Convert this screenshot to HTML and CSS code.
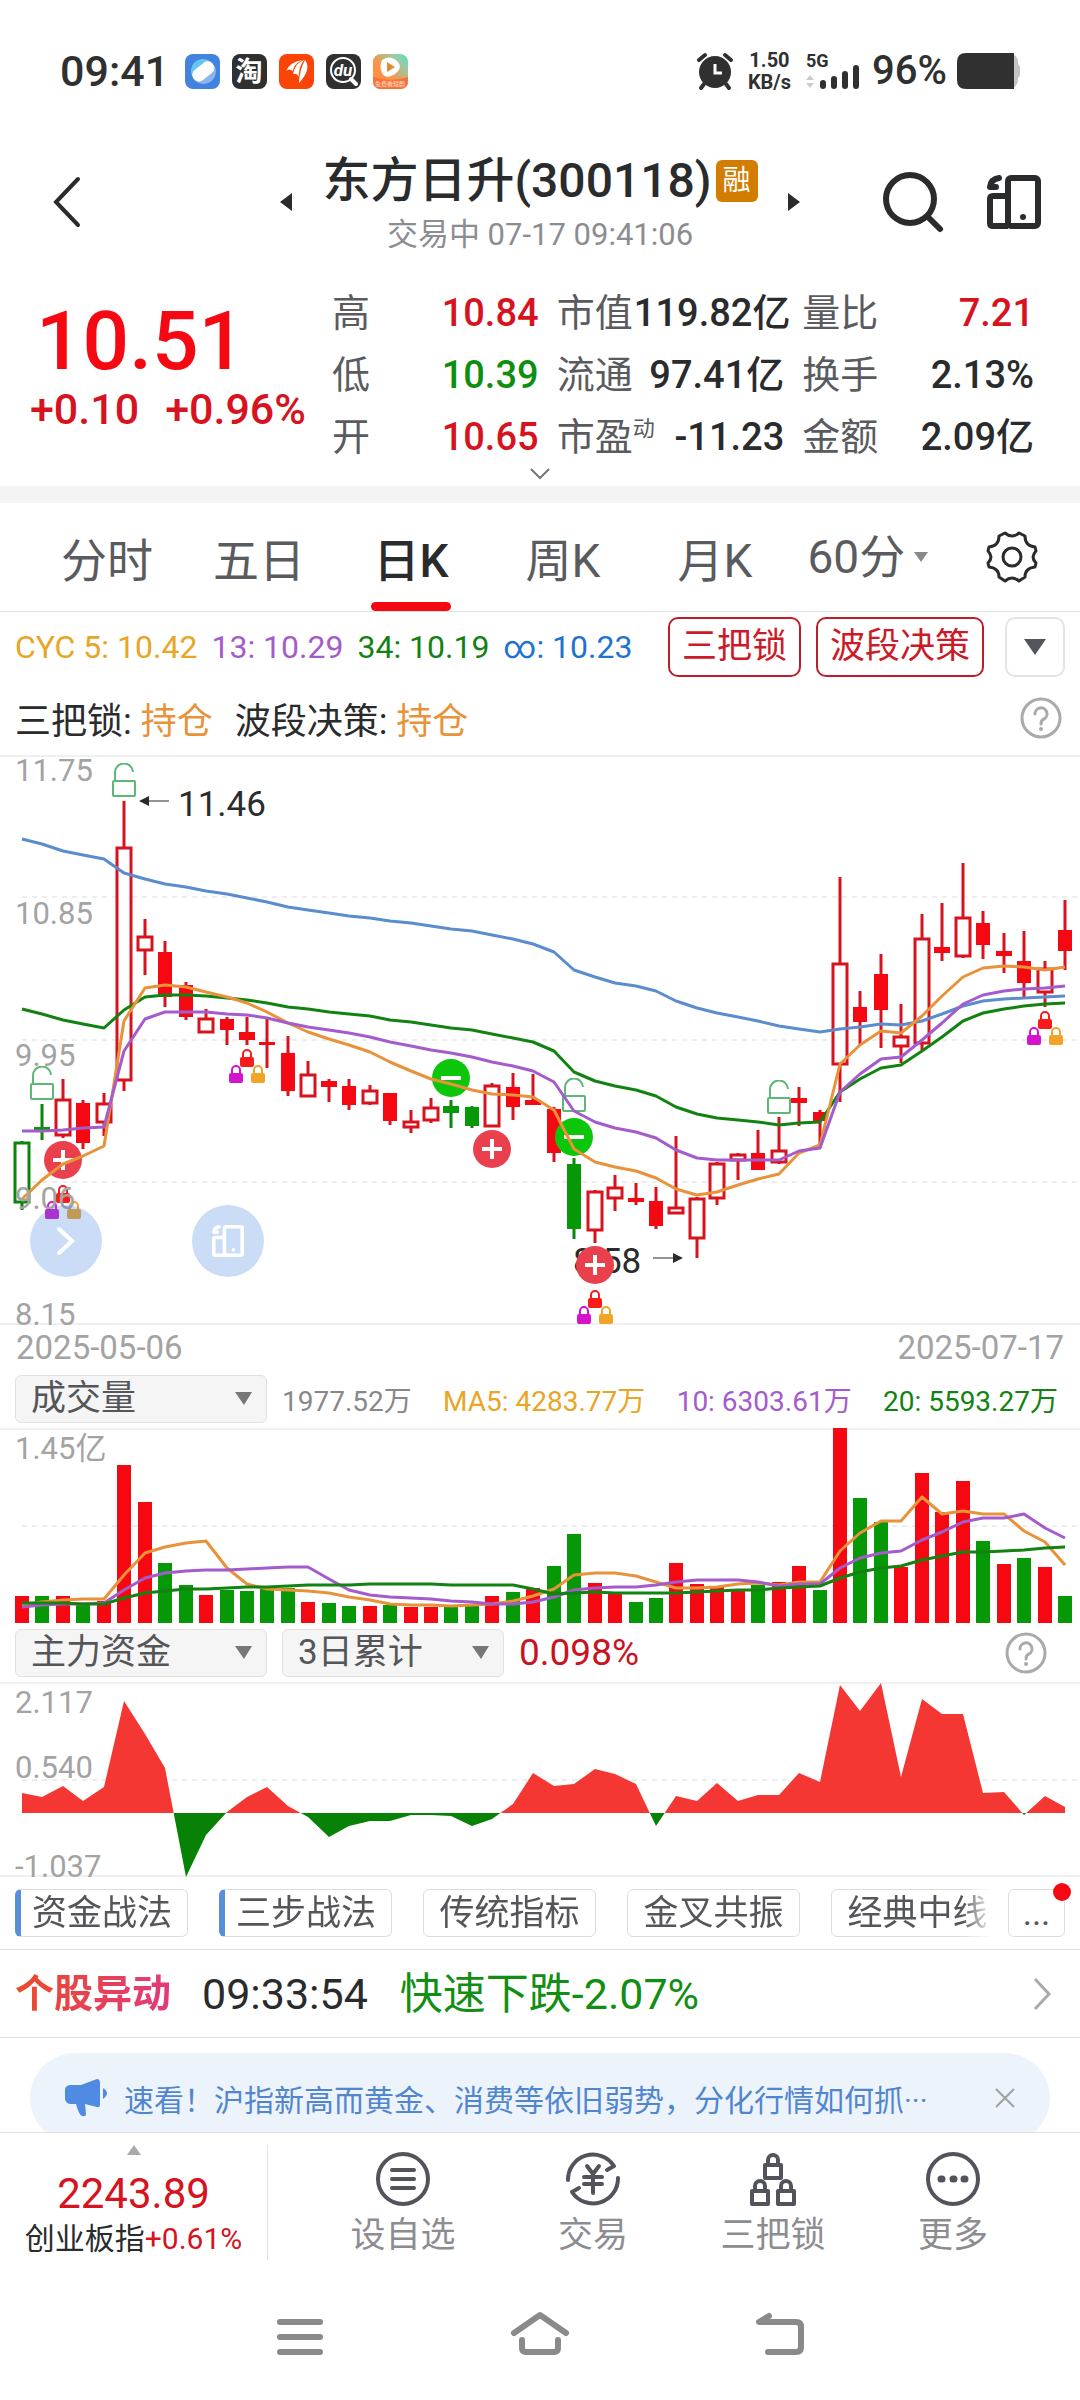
FILE: index.html
```html
<!DOCTYPE html>
<html lang="zh-CN">
<head>
    <meta charset="UTF-8">
    <meta name="viewport" content="width=device-width, initial-scale=1.0">
    <title>东方日升(300118)</title>
    <link rel="stylesheet" href="styles.css">
</head>
<body>
    <!-- shared symbols -->
    <svg class="sprite" aria-hidden="true">
        <symbol id="i-fold" viewBox="0 0 54 54">
            <path d="M12 3Q4 4 3 12H9" fill="none" stroke="currentColor" stroke-width="6" stroke-linecap="round" stroke-linejoin="round"/>
            <path d="M21 21H6Q3 21 3 24V48Q3 51 6 51H21" fill="none" stroke="currentColor" stroke-width="6"/>
            <rect x="21" y="3" width="30" height="48" rx="3" fill="none" stroke="currentColor" stroke-width="6"/>
            <circle cx="36" cy="42" r="3" fill="currentColor"/>
        </symbol>
        <symbol id="i-open-lock" viewBox="0 0 24 34">
            <path d="M3 17V10A8 8 0 0 1 21 9" fill="none" stroke="#5cb874" stroke-width="2"/>
            <rect x="1" y="18" width="22" height="15" rx="1" fill="#fff" fill-opacity=".5" stroke="#5cb874" stroke-width="2"/>
        </symbol>
        <symbol id="i-lock" viewBox="0 0 14 18">
            <path d="M3 9V5A4 4 0 0 1 11 5V9" fill="none" stroke="currentColor" stroke-width="2"/>
            <rect x="0" y="8" width="14" height="10" rx="2" fill="currentColor"/>
        </symbol>
        <symbol id="i-help" viewBox="0 0 42 42">
            <circle cx="21" cy="21" r="19" fill="none" stroke="currentColor" stroke-width="3"/>
            <path d="M15 17A6 6 0 1 1 24 22Q21 23 21 27" fill="none" stroke="currentColor" stroke-width="3" stroke-linecap="round"/>
            <circle cx="21" cy="32" r="2" fill="currentColor"/>
        </symbol>
    </svg>

    <div class="status-bar">
        <div class="status-left">
            <span class="clock">09:41</span>
            <svg class="app-icon" viewBox="0 0 35 35">
                <rect width="35" height="35" rx="8" fill="#4382de"/>
                <circle cx="18" cy="17" r="12" fill="#62c6f5"/>
                <path d="M29 11A12 12 0 0 1 8 24Z" fill="#8fb5ee"/>
                <rect x="6" y="11" width="24" height="13" rx="6" fill="#fff" transform="rotate(-38 18 17)"/>
            </svg>
            <svg class="app-icon" viewBox="0 0 35 35">
                <rect width="35" height="35" rx="8" fill="#303030"/>
                <text x="17" y="27" class="app-glyph" text-anchor="middle">淘</text>
            </svg>
            <svg class="app-icon" viewBox="0 0 35 35">
                <rect width="35" height="35" rx="8" fill="#fc4406"/>
                <path d="M7 17Q11 8 23 6Q14 11 14 17Q10 14 7 17ZM14 20Q17 8 25 6Q19 14 20 23Q18 19 14 20ZM20 27Q21 15 26 6Q33 15 20 29Z" fill="#fff"/>
            </svg>
            <svg class="app-icon" viewBox="0 0 35 35">
                <rect width="35" height="35" rx="8" fill="#303030"/>
                <circle cx="17" cy="16" r="12" fill="none" stroke="#fff" stroke-width="2"/>
                <path d="M25 25L30 30" stroke="#fff" stroke-width="4" stroke-linecap="round"/>
                <text x="17" y="22" class="du-glyph" text-anchor="middle">du</text>
            </svg>
            <svg class="app-icon" viewBox="0 0 35 35">
                <defs>
                    <linearGradient id="play-bg" x1="0" y1="1" x2="1" y2="0">
                        <stop offset="0.4" stop-color="#ff9145"/>
                        <stop offset="0.8" stop-color="#8fd0a8"/>
                        <stop offset="1" stop-color="#55dcc0"/>
                    </linearGradient>
                </defs>
                <rect width="35" height="35" rx="8" fill="url(#play-bg)"/>
                <path d="M0 23Q17 29 35 23V27Q35 35 27 35H8Q0 35 0 27Z" fill="#fb6f3c"/>
                <path d="M9 6Q18 0 25 8Q30 14 22 20Q13 26 9 19Q6 13 9 6Z" fill="#fff"/>
                <path d="M14 8L22 13L14 18Z" fill="#e28b35"/>
                <text x="17" y="32" class="tiny-glyph" text-anchor="middle">免费看短剧</text>
            </svg>
        </div>
        <div class="status-right">
            <svg class="alarm" viewBox="0 0 36 36">
                <circle cx="18" cy="19" r="16" fill="#303030"/>
                <path d="M2 7L8 2M34 7L28 2M7 31L4 35M29 31L32 35" stroke="#303030" stroke-width="4" stroke-linecap="round"/>
                <path d="M18 11V20H25" fill="none" stroke="#fff" stroke-width="3"/>
            </svg>
            <span class="net-speed">1.50<br>KB/s</span>
            <svg class="signal" viewBox="0 0 56 38">
                <text x="0" y="15" class="net-glyph">5G</text>
                <path d="M0 28L4 23L8 28ZM0 31L4 36L8 31Z" fill="#ccc"/>
                <path d="M17 31V34M28 27V34M39 22V34M50 16V34" stroke="#303030" stroke-width="6" stroke-linecap="round"/>
            </svg>
            <span class="battery-text">96%</span>
            <svg class="battery" viewBox="0 0 63 36">
                <rect x="50" y="11" width="13" height="14" rx="4" fill="#c4c4c4"/>
                <rect x="4" y="0" width="57" height="36" rx="9" fill="#c4c4c4"/>
                <path d="M9 0H57V36H9Q0 36 0 27V9Q0 0 9 0Z" fill="#303030"/>
            </svg>
        </div>
    </div>

    <header class="header">
        <button class="icon-btn back" aria-label="返回">
            <svg width="28" height="52" viewBox="0 0 28 52"><path d="M25 3L3 26L25 49" fill="none" stroke="#2a2b2d" stroke-width="4" stroke-linecap="round"/></svg>
        </button>
        <button class="icon-btn" aria-label="上一只">
            <svg width="12" height="18" viewBox="0 0 12 18"><path d="M12 0V18L0 9Z" fill="#2a2b2d"/></svg>
        </button>
        <div class="title-block">
            <h1 class="title">东方日升(300118)<span class="badge">融</span></h1>
            <p class="subtitle">交易中 07-17 09:41:06</p>
        </div>
        <button class="icon-btn" aria-label="下一只">
            <svg width="12" height="18" viewBox="0 0 12 18"><path d="M0 0V18L12 9Z" fill="#2a2b2d"/></svg>
        </button>
        <div class="header-actions">
            <button class="icon-btn" aria-label="搜索">
                <svg width="60" height="60" viewBox="0 0 60 60"><circle cx="27" cy="27" r="24" fill="none" stroke="#2a2b2d" stroke-width="6"/><path d="M45 45L57 57" stroke="#2a2b2d" stroke-width="6" stroke-linecap="round"/></svg>
            </button>
            <button class="icon-btn" aria-label="多屏">
                <svg width="54" height="54"><use href="#i-fold"/></svg>
            </button>
        </div>
    </header>

    <section class="quote">
        <div class="price-block">
            <div class="price">10.51</div>
            <div class="change"><span>+0.10</span><span>+0.96%</span></div>
        </div>
        <table class="quote-table">
            <colgroup>
                <col class="c-label"><col class="c-first"><col class="c-label"><col class="c-mid"><col class="c-label"><col class="c-last">
            </colgroup>
            <tr>
                <th>高</th><td class="up">10.84</td>
                <th>市值</th><td>119.82亿</td>
                <th>量比</th><td class="up">7.21</td>
            </tr>
            <tr>
                <th>低</th><td class="down">10.39</td>
                <th>流通</th><td>97.41亿</td>
                <th>换手</th><td>2.13%</td>
            </tr>
            <tr>
                <th>开</th><td class="up">10.65</td>
                <th>市盈<sup>动</sup></th><td>-11.23</td>
                <th>金额</th><td>2.09亿</td>
            </tr>
        </table>
    </section>
    <button class="expand" aria-label="展开">
        <svg width="22" height="12" viewBox="0 0 22 12"><path d="M2 1L11 10L20 1" fill="none" stroke="#777" stroke-width="2"/></svg>
    </button>

    <nav class="tabs">
        <button class="tab">分时</button>
        <button class="tab">五日</button>
        <button class="tab active">日K</button>
        <button class="tab">周K</button>
        <button class="tab">月K</button>
        <label class="tab-select">
            <select aria-label="分钟周期"><option>60分</option></select>
            <svg width="14" height="10" viewBox="0 0 14 10"><path d="M0 0H14L7 10Z" fill="#888"/></svg>
        </label>
        <button class="icon-btn settings" aria-label="设置">
            <svg width="52" height="52" viewBox="0 0 52 52">
                <path d="M19 2Q26 8 33 2L39 5Q39 15 49 16L50 20Q44 26 50 32L49 36Q39 37 39 46L33 50Q26 44 19 50L13 46Q13 37 3 36L2 32Q8 26 2 20L3 16Q13 15 13 5Z" fill="none" stroke="#2a2b2d" stroke-width="3" stroke-linejoin="round"/>
                <circle cx="26" cy="26" r="9" fill="none" stroke="#2a2b2d" stroke-width="3"/>
            </svg>
        </button>
    </nav>

    <div class="indicators">
        <div class="cyc">
            <span class="gold">CYC 5: 10.42</span>
            <span class="purple">13: 10.29</span>
            <span class="green">34: 10.19</span>
            <span class="blue">∞: 10.23</span>
        </div>
        <div class="indicator-btns">
            <button class="outline-btn">三把锁</button>
            <button class="outline-btn">波段决策</button>
            <button class="more-btn" aria-label="更多指标">
                <svg width="22" height="16" viewBox="0 0 22 16"><path d="M0 0H22L11 16Z" fill="#54555c"/></svg>
            </button>
        </div>
    </div>
    <div class="signals">
        <span>三把锁: <em>持仓</em></span>
        <span>波段决策: <em>持仓</em></span>
        <button class="icon-btn help" aria-label="说明"><svg width="42" height="42"><use href="#i-help"/></svg></button>
    </div>

    <div class="chart-wrap">
        <svg id="kline" class="chart" viewBox="0 0 1080 570"></svg>
        <div class="floats">
            <button class="float-btn" aria-label="展开工具">
                <svg width="20" height="30" viewBox="0 0 20 30"><path d="M3 3L16 15L3 27" fill="none" stroke="#fff" stroke-width="4" stroke-linecap="round"/></svg>
            </button>
            <button class="float-btn" aria-label="多屏">
                <svg width="32" height="32"><use href="#i-fold"/></svg>
            </button>
        </div>
    </div>
    <div class="dates"><span>2025-05-06</span><span>2025-07-17</span></div>

    <div class="sub-head">
        <label class="picker wide">
            <select aria-label="指标"><option>成交量</option></select>
            <svg width="17" height="13" viewBox="0 0 17 13"><path d="M0 0H17L9 13Z" fill="#777"/></svg>
        </label>
        <div class="ma">
            <span class="grey">1977.52万</span>
            <span class="gold">MA5: 4283.77万</span>
            <span class="purple">10: 6303.61万</span>
            <span class="green">20: 5593.27万</span>
        </div>
    </div>
    <svg id="volume" class="chart" viewBox="0 0 1080 195"></svg>

    <div class="sub-head">
        <label class="picker wide">
            <select aria-label="资金指标"><option>主力资金</option></select>
            <svg width="17" height="13" viewBox="0 0 17 13"><path d="M0 0H17L9 13Z" fill="#777"/></svg>
        </label>
        <label class="picker">
            <select aria-label="统计周期"><option>3日累计</option></select>
            <svg width="17" height="13" viewBox="0 0 17 13"><path d="M0 0H17L9 13Z" fill="#777"/></svg>
        </label>
        <span class="fund-value">0.098%</span>
        <button class="icon-btn help fund-help" aria-label="说明"><svg width="42" height="42"><use href="#i-help"/></svg></button>
    </div>
    <svg id="fund" class="chart" viewBox="0 0 1080 195"></svg>

    <div class="chips">
        <div class="chip-list">
            <button class="chip marked">资金战法</button>
            <button class="chip marked">三步战法</button>
            <button class="chip">传统指标</button>
            <button class="chip">金叉共振</button>
            <button class="chip">经典中线</button>
        </div>
        <button class="chip chip-more">...</button>
    </div>

    <a class="alert" href="#">
        <strong>个股异动</strong>
        <span class="alert-time">09:33:54</span>
        <span class="alert-text">快速下跌-2.07%</span>
        <svg width="18" height="34" viewBox="0 0 18 34"><path d="M2 2L16 17L2 32" fill="none" stroke="#aaa" stroke-width="3"/></svg>
    </a>

    <div class="banner-wrap">
        <div class="banner">
            <svg width="44" height="38" viewBox="0 0 44 38">
                <path d="M0 10Q1 6 6 6H16L32 0Q35 0 35 4V25Q35 29 32 28L20 25L21 35Q21 38 17 37Q14 36 11 25H6Q1 25 0 20Z" fill="#4f8ae3"/>
                <path d="M38 9Q46 14 38 20Z" fill="#4f8ae3"/>
            </svg>
            <a class="banner-text" href="#">速看！沪指新高而黄金、消费等依旧弱势，分化行情如何抓···</a>
            <button class="icon-btn" aria-label="关闭">
                <svg width="20" height="20" viewBox="0 0 20 20"><path d="M1 1L19 19M19 1L1 19" stroke="#a0a0a0" stroke-width="2"/></svg>
            </button>
        </div>
    </div>

    <div class="bottom-bar">
        <a class="index" href="#">
            <svg width="14" height="10" viewBox="0 0 14 10"><path d="M0 10H14L7 0Z" fill="#aaa"/></svg>
            <span class="index-value">2243.89</span>
            <span class="index-name">创业板指<b>+0.61%</b></span>
        </a>
        <div class="actions">
            <button class="action">
                <svg width="54" height="54" viewBox="0 0 54 54"><circle cx="27" cy="27" r="25"/><path d="M16 18H38M16 27H38M16 36H38"/></svg>
                设自选
            </button>
            <button class="action">
                <svg width="54" height="54" viewBox="0 0 54 54">
                    <path d="M2 28A25 25 0 0 1 48 14L41 18M52 26A25 25 0 0 1 6 40L13 36M21 14L27 22L33 14M18 25H36M18 32H36M27 22V41"/>
                </svg>
                交易
            </button>
            <button class="action">
                <svg width="54" height="54" viewBox="0 0 54 54">
                    <path d="M19 13H35V26H19ZM22 13V8A5 5 0 0 1 32 8V13M6 39H22V52H6ZM9 39V34A5 5 0 0 1 19 34V39M32 39H48V52H32ZM35 39V34A5 5 0 0 1 45 34V39"/>
                </svg>
                三把锁
            </button>
            <button class="action">
                <svg width="54" height="54" viewBox="0 0 54 54"><circle cx="27" cy="27" r="25"/><path d="M15 27h1M27 27h1M38 27h1" stroke-width="7"/></svg>
                更多
            </button>
        </div>
    </div>

    <div class="sys-nav">
        <button class="icon-btn" aria-label="任务">
            <svg width="60" height="44" viewBox="0 0 60 44"><path d="M10 10H50M10 25H50M10 40H50"/></svg>
        </button>
        <button class="icon-btn" aria-label="主页">
            <svg width="60" height="44" viewBox="0 0 60 44"><path d="M4 21L30 3L56 21M12 28V36Q12 40 16 40H44Q48 40 48 36V28"/></svg>
        </button>
        <button class="icon-btn" aria-label="返回上级">
            <svg width="60" height="44" viewBox="0 0 60 44"><path d="M19 4L9 10H46Q51 10 51 15V35Q51 40 46 40H18"/></svg>
        </button>
    </div>

    <script src="charts.js"></script>
</body>
</html>
```
FILE: styles.css
```css
* { box-sizing: border-box; }
body {
    margin: 0;
    background: #fff;
    color: #2a2b2d;
    font-family: Roboto, "Noto Sans CJK SC", sans-serif;
    font-size: 35px;
}
button, select { font-family: inherit; font-size: inherit; color: inherit; margin: 0; padding: 0; background: none; border: none; }
a { color: inherit; text-decoration: none; }
svg { display: block; flex: none; overflow: visible; }
.sprite { position: absolute; width: 0; height: 0; }
.icon-btn { display: flex; align-items: center; justify-content: center; }

.up { color: #d6131f; }
.down { color: #0f8f0f; }
.gold { color: #e9a526; }
.purple { color: #a45bcc; }
.green { color: #128312; }
.blue { color: #1d74cf; }
.grey { color: #888; }

/* status bar */
.status-bar { display: flex; justify-content: space-between; align-items: center; height: 142px; padding: 0 60px; }
.status-left, .status-right { display: flex; align-items: center; }
.status-left { gap: 12px; }
.status-right { gap: 10px; }
.clock { font-size: 43px; line-height: 48px; font-weight: 500; color: #303030; margin-right: 4px; }
.app-icon { width: 35px; height: 35px; }
.app-glyph { font-size: 27px; font-weight: bold; fill: #fff; }
.du-glyph { font-size: 17px; font-weight: bold; font-style: italic; fill: #fff; }
.tiny-glyph { font-size: 6px; fill: #ffe0c8; }
.alarm { width: 36px; height: 38px; }
.net-speed { font-size: 20px; line-height: 22px; font-weight: bold; text-align: center; color: #303030; margin: 0 5px; }
.signal { width: 56px; height: 38px; }
.net-glyph { font-size: 18px; font-weight: bold; fill: #303030; }
.battery-text { font-size: 40px; line-height: 44px; font-weight: 500; color: #303030; }
.battery { width: 63px; height: 36px; }

/* header */
.header { display: grid; grid-template-columns: 280px auto 1fr auto 280px; align-items: center; padding: 7px 0 0; }
.back { justify-content: flex-start; padding-left: 53px; }
.title-block { text-align: center; white-space: nowrap; }
.title { display: flex; align-items: center; justify-content: center; gap: 4px; margin: 0; font-size: 48px; line-height: 64px; font-weight: 500; }
.badge { width: 42px; height: 42px; border-radius: 6px; background: #d27c00; color: #fff; font-size: 28px; line-height: 41px; font-weight: normal; }
.subtitle { margin: 3px 0 0; font-size: 31px; line-height: 38px; color: #8c8d90; }
.header-actions { display: flex; align-items: center; justify-content: flex-end; gap: 44px; padding-right: 39px; }

/* quote */
.quote { display: grid; grid-template-columns: 332fr 702fr; padding: 28px 46px 0 0; }
.price-block { color: #d6131f; font-weight: 500; }
.price { padding: 14px 0 0 36px; font-size: 82px; line-height: 90px; color: #f60813; }
.change { display: flex; gap: 26px; padding-left: 30px; font-size: 43px; line-height: 46px; white-space: nowrap; }
.quote-table { width: 100%; table-layout: fixed; border-collapse: collapse; font-size: 38px; line-height: 62px; }
.quote-table th { padding: 0; text-align: left; font-weight: normal; color: #5a5b5e; white-space: nowrap; }
.quote-table td { padding: 0 18px 0 0; height: 62px; text-align: right; font-weight: 500; white-space: nowrap; }
.quote-table td:last-child { padding-right: 0; }
.quote-table sup { font-size: 22px; line-height: 22px; vertical-align: 14px; }
.c-label { width: 11%; }
.c-first { width: 21%; }
.c-mid { width: 24%; }
.c-last { width: 22%; }
.expand { display: flex; justify-content: center; width: 100%; height: 18px; }

/* period tabs */
.tabs { display: flex; align-items: stretch; height: 126px; padding-left: 31px; border-top: 17px solid #f4f4f4; border-bottom: 1px solid #e2e2e2; font-size: 46px; color: #5a5b5e; }
.tab { flex: 152 1 0; position: relative; }
.tab.active { color: #2a2b2d; font-weight: 500; }
.tab.active::after { content: ""; position: absolute; left: 50%; bottom: 0; width: 80px; height: 9px; margin-left: -40px; border-radius: 5px; background: #f60813; }
.tab-select { flex: 153 1 0; display: flex; align-items: center; justify-content: center; gap: 8px; }
.settings { flex: 136 1 0; }
.tab-select select { appearance: none; line-height: 60px; }

/* indicator rows */
.indicators { display: flex; align-items: center; justify-content: space-between; height: 69px; padding: 0 15px; font-size: 32px; }
.cyc { display: flex; gap: 14px; white-space: nowrap; }
.indicator-btns { display: flex; gap: 15px; font-size: 35px; }
.outline-btn { height: 60px; padding: 0 12px; border: 2px solid #bf1d2b; border-radius: 10px; color: #cc1a28; line-height: 54px; }
.more-btn { display: flex; align-items: center; justify-content: center; width: 60px; height: 60px; margin-left: 6px; border: 2px solid #e4e4e4; border-radius: 10px; }
.signals { display: flex; align-items: center; gap: 22px; height: 74px; padding: 0 18px 0 15px; font-size: 36px; }
.signals em { font-style: normal; color: #e8923a; }
.help { color: #aaa; margin-left: auto; }
.fund-help { margin-right: 18px; }

/* charts */
.chart-wrap { position: relative; }
.chart { width: 100%; height: auto; }
.floats { position: absolute; left: 30px; bottom: 48px; display: flex; gap: 90px; }
.float-btn { display: flex; align-items: center; justify-content: center; width: 72px; height: 72px; border-radius: 50%; background: rgba(64, 128, 220, .27); color: #fff; }
.frame { stroke: #f0f0f0; stroke-width: 2; }
.grid { stroke: #ededed; stroke-width: 2; stroke-dasharray: 5 5; }
.axis { font-size: 31px; fill: #a3a3a3; }
.peak { font-size: 35px; fill: #2a2b2d; }
.dates { display: flex; justify-content: space-between; align-items: center; height: 44px; padding: 0 16px; font-size: 33px; color: #a3a3a3; }
.sub-head { display: flex; align-items: center; gap: 15px; height: 59px; padding: 0 15px; }
.picker { position: relative; display: flex; align-items: center; width: 222px; height: 48px; border: 1px solid #e2e2e2; border-radius: 6px; background: #f5f5f5; color: #55565a; }
.picker.wide { width: 252px; }
.picker select { appearance: none; width: 100%; height: 46px; padding-left: 15px; }
.picker svg { position: absolute; right: 14px; }
.ma { flex: 1; display: flex; justify-content: space-between; padding-right: 7px; font-size: 28px; white-space: nowrap; }
.fund-value { font-size: 37px; color: #c8141f; }

/* strategy chips */
.chips { display: flex; align-items: center; gap: 16px; height: 73px; padding: 0 15px; border-bottom: 1px solid #e2e2e2; color: #55565a; }
.chip-list { flex: 1; display: flex; gap: 31px; overflow: hidden; mask-image: linear-gradient(to right, #000 97%, transparent); }
.chip { flex: none; width: 173px; height: 48px; border: 1px solid #ddd; border-radius: 6px; line-height: 48px; white-space: nowrap; }
.chip.marked { border-left: 6px solid #588fd8; padding-right: 4px; }
.chip-more { position: relative; width: 57px; }
.chip-more::after { content: ""; position: absolute; top: -7px; right: -7px; width: 18px; height: 18px; border-radius: 50%; background: #f60813; }

/* stock alert */
.alert { display: flex; align-items: center; height: 88px; padding: 0 29px 0 15px; border-bottom: 1px solid #e2e2e2; font-size: 43px; line-height: 60px; }
.alert strong { font-size: 39px; background: linear-gradient(100deg, #ee4a26, #e03a80); background-clip: text; color: transparent; }
.alert-time { margin-left: 31px; }
.alert-text { margin-left: 32px; color: #128f12; }
.alert svg { margin-left: auto; }

.banner-wrap { height: 94px; padding: 15px 30px 0; overflow: hidden; }
.banner { display: flex; align-items: center; height: 90px; padding: 0 35px; border-radius: 45px; background: #edf3fb; }
.banner-text { flex: 1; padding-left: 15px; font-size: 30px; color: #5186cf; white-space: nowrap; overflow: hidden; }

/* bottom bar */
.bottom-bar { display: grid; grid-template-columns: 268fr 812fr; height: 138px; border-top: 1px solid #e2e2e2; }
.index { display: flex; flex-direction: column; align-items: center; margin: 12px 0 10px; border-right: 1px solid #e2e2e2; }
.index-value { padding-top: 14px; font-size: 42px; line-height: 50px; color: #d6131f; }
.index-name { font-size: 30px; line-height: 40px; white-space: nowrap; }
.index-name b { font-weight: normal; color: #d6131f; }
.actions { display: grid; grid-template-columns: 19fr 19fr 17fr 19fr; padding: 19px 32px 0 40px; }
.action { display: flex; flex-direction: column; align-items: center; gap: 5px; line-height: 50px; color: #8c8d90; }
.action svg { fill: none; stroke: #52535b; stroke-width: 4; stroke-linecap: round; stroke-linejoin: round; }

.sys-nav { display: flex; justify-content: center; gap: 180px; padding-top: 42px; }
.sys-nav svg { fill: none; stroke: #8a8a8a; stroke-width: 6; stroke-linecap: round; stroke-linejoin: round; }
```
FILE: charts.js
```js
const STEP = 20.45;
const FIRST = 22;
const RED = '#d6131f';
const GREEN = '#0b850b';
const px = i => Math.round(FIRST + i * STEP);

// [kind, high, top, bottom, low]  u: hollow red, r: solid red, g: solid green, h: hollow green
const candles = [
    ['h',386,387,448,455], ['g',349,372,375,385], ['u',324,344,381,383], ['r',345,348,388,394],
    ['u',338,348,368,381], ['u',46,92,326,336], ['u',164,181,196,220], ['r',186,197,242,252],
    ['r',227,230,262,265], ['u',254,263,278,278], ['r',262,264,275,290], ['r',262,277,285,290],
    ['r',264,287,290,313], ['r',281,298,336,341], ['u',306,319,342,342], ['r',324,326,332,347],
    ['r',324,331,350,355], ['u',330,335,349,350], ['r',338,338,366,370], ['u',355,366,373,378],
    ['u',343,352,366,368], ['g',345,351,358,373], ['g',351,352,371,373], ['u',328,330,372,372],
    ['r',318,332,352,365], ['r',319,345,350,350], ['r',352,354,398,407], ['g',403,409,474,484],
    ['u',435,436,476,488], ['u',420,432,444,456], ['r',428,443,447,450], ['r',432,446,471,474],
    ['u',381,452,459,459], ['u',442,443,484,503], ['u',407,408,444,450], ['u',398,399,406,425],
    ['r',375,398,415,415], ['u',362,395,408,409], ['r',332,343,348,371], ['r',355,357,366,393],
    ['u',122,208,310,347], ['r',236,252,267,290], ['r',199,219,255,293], ['u',249,281,292,308],
    ['u',159,183,289,295], ['r',148,192,198,206], ['u',108,162,202,203], ['r',156,168,190,204],
    ['r',178,196,201,218], ['r',176,206,228,244], ['u',206,213,238,252], ['r',145,175,196,215]
];

const cyc = {
    '#5b8ccd': [84,89,96,100,104,118,124,129,132,136,139,143,147,152,155,158,161,163,166,168,171,174,176,180,184,189,197,215,222,228,231,236,246,253,258,262,266,271,274,277,274,272,269,270,266,259,251,246,244,243,242,241],
    '#128312': [254,259,265,269,273,255,242,240,240,241,243,245,248,252,254,257,259,261,265,267,270,273,275,279,283,287,296,317,326,331,335,341,352,359,363,365,367,370,368,367,337,324,313,310,296,282,266,258,254,251,249,248],
    '#e8923a': [444,425,409,401,391,266,233,230,232,237,242,248,257,268,277,284,290,297,307,316,324,329,335,339,340,342,355,394,407,412,416,423,434,440,437,430,424,419,398,390,309,290,276,278,261,241,222,213,211,212,215,212],
    '#a45bcc': [376,376,375,373,372,296,264,257,257,257,259,260,263,268,272,275,278,282,287,291,295,298,302,307,311,316,327,356,367,373,377,383,395,403,405,405,405,405,396,393,337,319,304,302,285,268,249,240,236,234,233,231]
};

const volColors = 'rgrgrrrggrggggrggrgrrggrgrggrrggrrrrgrrgrggrrrrgrgrg';
const vol = [27,27,27,20,22,158,121,60,38,28,33,32,34,35,21,20,17,17,18,16,16,17,17,27,31,35,57,89,40,29,21,25,60,39,36,34,38,41,57,33,195,125,101,56,150,111,142,82,59,65,56,27];
const volMa = {
    '#e8923a': [177,174,172,171,171,147,125,119,115,113,140,156,161,162,163,165,169,172,176,177,177,178,177,176,173,168,161,147,145,145,148,154,160,160,159,156,155,157,154,154,123,105,93,93,69,86,83,86,86,103,114,137],
    '#a45bcc': [179,177,176,176,175,162,150,145,143,142,142,141,140,139,139,151,162,167,169,170,171,173,174,176,176,174,169,162,160,159,159,157,154,152,152,152,154,158,156,156,140,130,125,123,112,104,94,90,90,86,100,110],
    '#128312': [175,175,175,176,176,170,165,163,161,161,160,159,159,158,157,157,157,156,156,156,156,157,157,157,157,161,166,165,164,165,165,165,165,164,163,162,162,160,159,158,150,144,140,138,132,128,124,124,123,122,120,119]
};

const fund = [20,16,27,12,26,112,79,45,-64,-22,1,16,26,7,-4,-24,-13,-8,-8,-2,-2,-3,-13,-6,9,40,27,29,44,39,29,-13,17,12,30,12,18,18,40,31,128,102,130,36,114,99,99,20,21,-2,17,6];

function hline(y, cls) {
    return `<line class="${cls}" x1="${cls === 'grid' ? 22 : 0}" x2="1080" y1="${y}" y2="${y}"/>`;
}

function lines(series) {
    return Object.entries(series).map(([color, ys]) =>
        `<polyline fill="none" stroke="${color}" stroke-width="3" stroke-linejoin="round" points="${ys.map((y, i) => px(i) + ',' + y).join(' ')}"/>`
    ).join('');
}

function label(y, text) {
    return `<text class="axis" x="15" y="${y}">${text}</text>`;
}

function candle([kind, high, top, bottom, low], i) {
    const x = px(i);
    const color = kind === 'g' || kind === 'h' ? GREEN : RED;
    const wick = `<path d="M${x} ${high}V${top}M${x} ${bottom}V${low}" stroke="${color}" stroke-width="3"/>`;
    if (kind === 'u' || kind === 'h') {
        return wick + `<rect x="${x - 7}" y="${top + 1}" width="14" height="${Math.max(bottom - top - 2, 4)}" fill="#fff" stroke="${color}" stroke-width="3"/>`;
    }
    const small = bottom - top < 9;
    return wick + `<rect x="${x - (small ? 8 : 7)}" y="${top}" width="${small ? 16 : 14}" height="${bottom - top}" fill="${kind === 'g' ? '#069806' : '#f60813'}"/>`;
}

function openLock(i, y) {
    return `<use href="#i-open-lock" x="${px(i) - 12}" y="${y}" width="24" height="34"/>`;
}

function locks(i, y) {
    const one = (x, dy, color) => `<use href="#i-lock" x="${x}" y="${y + dy}" width="14" height="18" color="${color}"/>`;
    return one(px(i) - 7, 0, '#f91a1a') + one(px(i) - 18, 16, '#d414cb') + one(px(i) + 4, 16, '#f2a427');
}

function mark(i, y, buy) {
    const x = px(i);
    const cross = `M${x - 10} ${y}H${x + 10}` + (buy ? `M${x} ${y - 10}V${y + 10}` : '');
    return `<circle cx="${x}" cy="${y}" r="19" fill="${buy ? '#ea404e' : '#0cc60c'}"/><path d="${cross}" stroke="#fff" stroke-width="4"/>`;
}

document.getElementById('kline').innerHTML =
    hline(1, 'frame') + hline(142, 'grid') + hline(285, 'grid') + hline(427, 'grid') + hline(569, 'frame') +
    candles.map(candle).join('') +
    '<text class="peak" x="178" y="61">11.46</text><text class="peak" x="573" y="518">8.58</text>' +
    '<path d="M145 46H169M653 503H675" stroke="#2a2b2d"/><path d="M139 46L149 41V51ZM683 503L673 498V508Z" fill="#2a2b2d"/>' +
    openLock(1, 311) + openLock(5, 8) + openLock(27, 323) + openLock(37, 325) +
    locks(2, 430) + locks(11, 294) + locks(28, 535) + locks(50, 256) +
    mark(2, 405, true) + mark(23, 394, true) + mark(28, 510, true) + mark(21, 323) + mark(27, 382) +
    lines(cyc) +
    label(26, '11.75') + label(169, '10.85') + label(311, '9.95') + label(454, '9.06') + label(570, '8.15');

document.getElementById('volume').innerHTML =
    hline(1, 'frame') + hline(98, 'grid') +
    vol.map((h, i) => `<rect x="${px(i) - 7}" y="${195 - h}" width="14" height="${h}" fill="${volColors[i] === 'r' ? '#f60813' : '#069806'}"/>`).join('') +
    lines(volMa) + label(31, '1.45亿');

// fund flow area, split into two colours at the zero line
const ZERO = 131;
const area = `M${px(0)} ${ZERO}` + fund.map((v, i) => `L${px(i)} ${ZERO - v}`).join('') + `L${px(51)} ${ZERO}Z`;
document.getElementById('fund').innerHTML =
    `<clipPath id="above"><rect width="1080" height="${ZERO}"/></clipPath>` +
    `<clipPath id="below"><rect y="${ZERO}" width="1080" height="64"/></clipPath>` +
    hline(1, 'frame') + hline(98, 'grid') + hline(194, 'frame') +
    `<path d="${area}" fill="#f43732" clip-path="url(#above)"/><path d="${area}" fill="#078207" clip-path="url(#below)"/>` +
    label(31, '2.117') + label(96, '0.540') + label(195, '-1.037');
```
